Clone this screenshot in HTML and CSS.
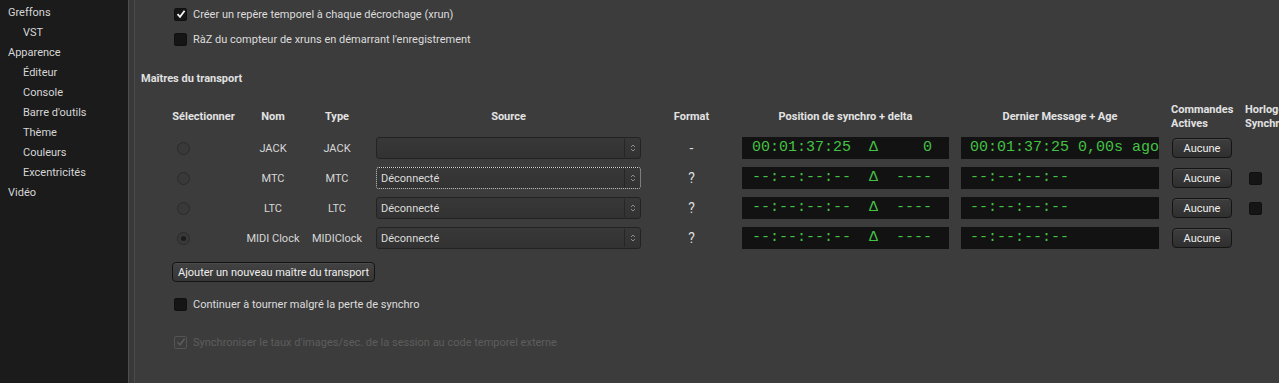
FILE: index.html
```html
<!DOCTYPE html>
<html lang="fr">
<head>
<meta charset="utf-8">
<title>Préférences</title>
<link rel="stylesheet" href="styles.css">
</head>
<body>
<div class="app">
  <nav class="sidebar">
    <div class="nav-item">Greffons</div>
    <div class="nav-item sub">VST</div>
    <div class="nav-item">Apparence</div>
    <div class="nav-item sub">Éditeur</div>
    <div class="nav-item sub">Console</div>
    <div class="nav-item sub">Barre d'outils</div>
    <div class="nav-item sub">Thème</div>
    <div class="nav-item sub">Couleurs</div>
    <div class="nav-item sub">Excentricités</div>
    <div class="nav-item">Vidéo</div>
  </nav>
  <div class="divider"></div>
  <main class="main">
    <div class="opt">
      <span class="check"><svg viewBox="0 0 10 10" width="10" height="10"><polyline points="1.5,5.2 4,7.8 8.6,1.8" fill="none" stroke="#f2f2f2" stroke-width="1.8"/></svg></span>
      <span>Créer un repère temporel à chaque décrochage (xrun)</span>
    </div>
    <div class="opt">
      <span class="check"></span>
      <span>RàZ du compteur de xruns en démarrant l'enregistrement</span>
    </div>

    <h2 class="section-title">Maîtres du transport</h2>

    <div class="grid">
      <div class="cell head">Sélectionner</div>
      <div class="cell head">Nom</div>
      <div class="cell head">Type</div>
      <div class="cell head c-src">Source</div>
      <div class="cell head">Format</div>
      <div class="cell head c-pos">Position de synchro + delta</div>
      <div class="cell head c-msg">Dernier Message + Age</div>
      <div class="cell head c-cmd">Commandes<br>Actives</div>
      <div class="cell head c-clk">Horloge<br>Synchro</div>

      <!-- JACK -->
      <div class="cell c-sel"><span class="radio"></span></div>
      <div class="cell">JACK</div>
      <div class="cell">JACK</div>
      <div class="cell c-src"><div class="combo"><span class="combo-text"></span><span class="combo-arrow"><svg viewBox="0 0 6 10" width="6" height="10"><polyline points="1,4 3,2 5,4" fill="none" stroke="#8a8a8a" stroke-width="1"/><polyline points="1,6 3,8 5,6" fill="none" stroke="#8a8a8a" stroke-width="1"/></svg></span></div></div>
      <div class="cell fmt">-</div>
      <div class="cell c-pos"><div class="tc tc-pos">00:01:37:25  Δ     0</div></div>
      <div class="cell c-msg"><div class="tc tc-msg">00:01:37:25 0,00s ago</div></div>
      <div class="cell c-cmd"><button class="btn small">Aucune</button></div>
      <div class="cell c-clk"></div>

      <!-- MTC -->
      <div class="cell c-sel"><span class="radio"></span></div>
      <div class="cell">MTC</div>
      <div class="cell">MTC</div>
      <div class="cell c-src"><div class="combo focus"><span class="combo-text">Déconnecté</span><span class="combo-arrow"><svg viewBox="0 0 6 10" width="6" height="10"><polyline points="1,4 3,2 5,4" fill="none" stroke="#8a8a8a" stroke-width="1"/><polyline points="1,6 3,8 5,6" fill="none" stroke="#8a8a8a" stroke-width="1"/></svg></span></div></div>
      <div class="cell fmt">?</div>
      <div class="cell c-pos"><div class="tc tc-pos">--:--:--:--  Δ  ----</div></div>
      <div class="cell c-msg"><div class="tc tc-msg">--:--:--:--</div></div>
      <div class="cell c-cmd"><button class="btn small">Aucune</button></div>
      <div class="cell c-clk"><span class="check"></span></div>

      <!-- LTC -->
      <div class="cell c-sel"><span class="radio"></span></div>
      <div class="cell">LTC</div>
      <div class="cell">LTC</div>
      <div class="cell c-src"><div class="combo"><span class="combo-text">Déconnecté</span><span class="combo-arrow"><svg viewBox="0 0 6 10" width="6" height="10"><polyline points="1,4 3,2 5,4" fill="none" stroke="#8a8a8a" stroke-width="1"/><polyline points="1,6 3,8 5,6" fill="none" stroke="#8a8a8a" stroke-width="1"/></svg></span></div></div>
      <div class="cell fmt">?</div>
      <div class="cell c-pos"><div class="tc tc-pos">--:--:--:--  Δ  ----</div></div>
      <div class="cell c-msg"><div class="tc tc-msg">--:--:--:--</div></div>
      <div class="cell c-cmd"><button class="btn small">Aucune</button></div>
      <div class="cell c-clk"><span class="check"></span></div>

      <!-- MIDI Clock -->
      <div class="cell c-sel"><span class="radio on"></span></div>
      <div class="cell">MIDI Clock</div>
      <div class="cell">MIDIClock</div>
      <div class="cell c-src"><div class="combo"><span class="combo-text">Déconnecté</span><span class="combo-arrow"><svg viewBox="0 0 6 10" width="6" height="10"><polyline points="1,4 3,2 5,4" fill="none" stroke="#8a8a8a" stroke-width="1"/><polyline points="1,6 3,8 5,6" fill="none" stroke="#8a8a8a" stroke-width="1"/></svg></span></div></div>
      <div class="cell fmt">?</div>
      <div class="cell c-pos"><div class="tc tc-pos">--:--:--:--  Δ  ----</div></div>
      <div class="cell c-msg"><div class="tc tc-msg">--:--:--:--</div></div>
      <div class="cell c-cmd"><button class="btn small">Aucune</button></div>
      <div class="cell c-clk"></div>
    </div>

    <button class="btn add">Ajouter un nouveau maître du transport</button>

    <div class="opt cont">
      <span class="check"></span>
      <span>Continuer à tourner malgré la perte de synchro</span>
    </div>
    <div class="opt disabled">
      <span class="check"><svg viewBox="0 0 10 10" width="10" height="10"><polyline points="1.5,5.2 4,7.8 8.6,1.8" fill="none" stroke="#5c5c5c" stroke-width="1.6"/></svg></span>
      <span>Synchroniser le taux d'images/sec. de la session au code temporel externe</span>
    </div>
  </main>
</div>
</body>
</html>
```

FILE: styles.css
```css
html, body {
  margin: 0;
  padding: 0;
}

body {
  background: #3c3c3c;
  color: #dcdcdc;
  font-family: Roboto, "Noto Sans", sans-serif;
  font-size: 11px;
  overflow: hidden;
  width: 1279px;
  height: 383px;
}

.app {
  display: flex;
  height: 383px;
}

/* Sidebar */
.sidebar {
  width: 128px;
  flex: none;
  background: #1b1b1b;
  padding-top: 3px;
  box-sizing: border-box;
}

.nav-item {
  height: 20px;
  line-height: 20px;
  padding-left: 8px;
  color: #d6d6d6;
  white-space: nowrap;
}

.nav-item.sub {
  padding-left: 23px;
}

.divider {
  width: 7px;
  flex: none;
  box-sizing: border-box;
  background: #393939;
  border-left: 1px solid #4e4e4e;
  border-right: 1px solid #4a4a4a;
}

/* Main */
.main {
  flex: 1;
  min-width: 0;
  overflow: hidden;
  padding: 4px 0 0 6px;
  display: flex;
  flex-direction: column;
  align-items: flex-start;
}

.opt {
  display: flex;
  align-items: center;
  gap: 6px;
  height: 20px;
  margin-left: 33px;
  white-space: nowrap;
}

.opt + .opt {
  margin-top: 5px;
}

.opt.cont {
  margin-top: 12px;
}

.opt.disabled {
  margin-top: 18px;
  color: #5d5d5d;
}

.check {
  width: 13px;
  height: 13px;
  box-sizing: border-box;
  background: #151515;
  border: 1px solid #101010;
  border-radius: 2px;
  display: flex;
  align-items: center;
  justify-content: center;
  flex: none;
}

.opt.disabled .check {
  background: transparent;
  border-color: #545454;
}

.section-title {
  margin: 22px 0 0;
  font-size: 11px;
  font-weight: 700;
  line-height: 16px;
  color: #e0e0e0;
}

/* Grid table */
.grid {
  margin: 14px 0 0 31px;
  display: grid;
  grid-template-columns: 63px 76px 52px 288px 81px 223px 210px 75px 60px;
  grid-template-rows: 32px repeat(4, 30px);
  flex: none;
}

.cell {
  display: flex;
  align-items: center;
  justify-content: center;
  white-space: nowrap;
  color: #d8d8d8;
}

.head {
  font-weight: 700;
  color: #e2e2e2;
  line-height: 14px;
}

.c-src {
  justify-content: flex-start;
  padding-left: 13px;
}

.head.c-src {
  justify-content: center;
  padding: 0 10px 0 13px;
}

.c-pos {
  justify-content: flex-start;
  padding-left: 10px;
}

.head.c-pos {
  justify-content: center;
  padding: 0 6px 0 10px;
}

.c-msg {
  justify-content: flex-start;
  padding-left: 6px;
}

.head.c-msg {
  justify-content: center;
  padding: 0 6px 0 6px;
}

.c-cmd {
  justify-content: flex-start;
  padding-left: 7px;
}

.head.c-cmd {
  padding-left: 6px;
  text-align: left;
}

.c-clk {
  justify-content: flex-start;
  padding-left: 9px;
}

.head.c-clk {
  padding-left: 5px;
  text-align: left;
}

.c-sel {
  justify-content: flex-start;
  padding-left: 5px;
}

.fmt {
  font-size: 14px;
  color: #dedede;
}

.radio {
  width: 13px;
  height: 13px;
  box-sizing: border-box;
  border-radius: 50%;
  border: 1px solid #2b2b2b;
  background: #393939;
  display: flex;
  align-items: center;
  justify-content: center;
}

.radio.on::after {
  content: "";
  width: 5px;
  height: 5px;
  border-radius: 50%;
  background: #1c1c1c;
}

.combo {
  width: 265px;
  height: 22px;
  box-sizing: border-box;
  background: linear-gradient(#383838, #323232);
  border: 1px solid #232323;
  border-radius: 3px;
  display: flex;
  align-items: center;
  padding-left: 4px;
}

.combo.focus {
  outline: 1px dotted #d8d8d8;
  outline-offset: -1px;
}

.combo-text {
  flex: 1;
  color: #dcdcdc;
}

.combo-arrow {
  width: 15px;
  height: 18px;
  border-left: 1px solid #262626;
  display: flex;
  align-items: center;
  justify-content: center;
}

.tc {
  height: 22px;
  line-height: 22px;
  background: #121212;
  color: #44c244;
  font-family: "Liberation Mono", monospace;
  font-size: 15px;
  white-space: pre;
  overflow: hidden;
  box-sizing: border-box;
}

.tc-pos {
  width: 207px;
  padding-left: 10px;
}

.tc-msg {
  width: 198px;
  padding-left: 9px;
}

/* Buttons */
.btn {
  font-family: Roboto, "Noto Sans", sans-serif;
  font-size: 11px;
  color: #eeeeee;
  background: linear-gradient(#3d3d3d, #2f2f2f);
  border: 1px solid #141414;
  border-radius: 4px;
  box-shadow: inset 0 1px 0 #4a4a4a;
  height: 20px;
  padding: 0;
  box-sizing: border-box;
  cursor: pointer;
}

.btn.small {
  width: 60px;
}

.btn.add {
  margin: 9px 0 0 31px;
  padding: 0 5px;
  height: 20px;
  background: linear-gradient(#424242, #363636);
}
```
